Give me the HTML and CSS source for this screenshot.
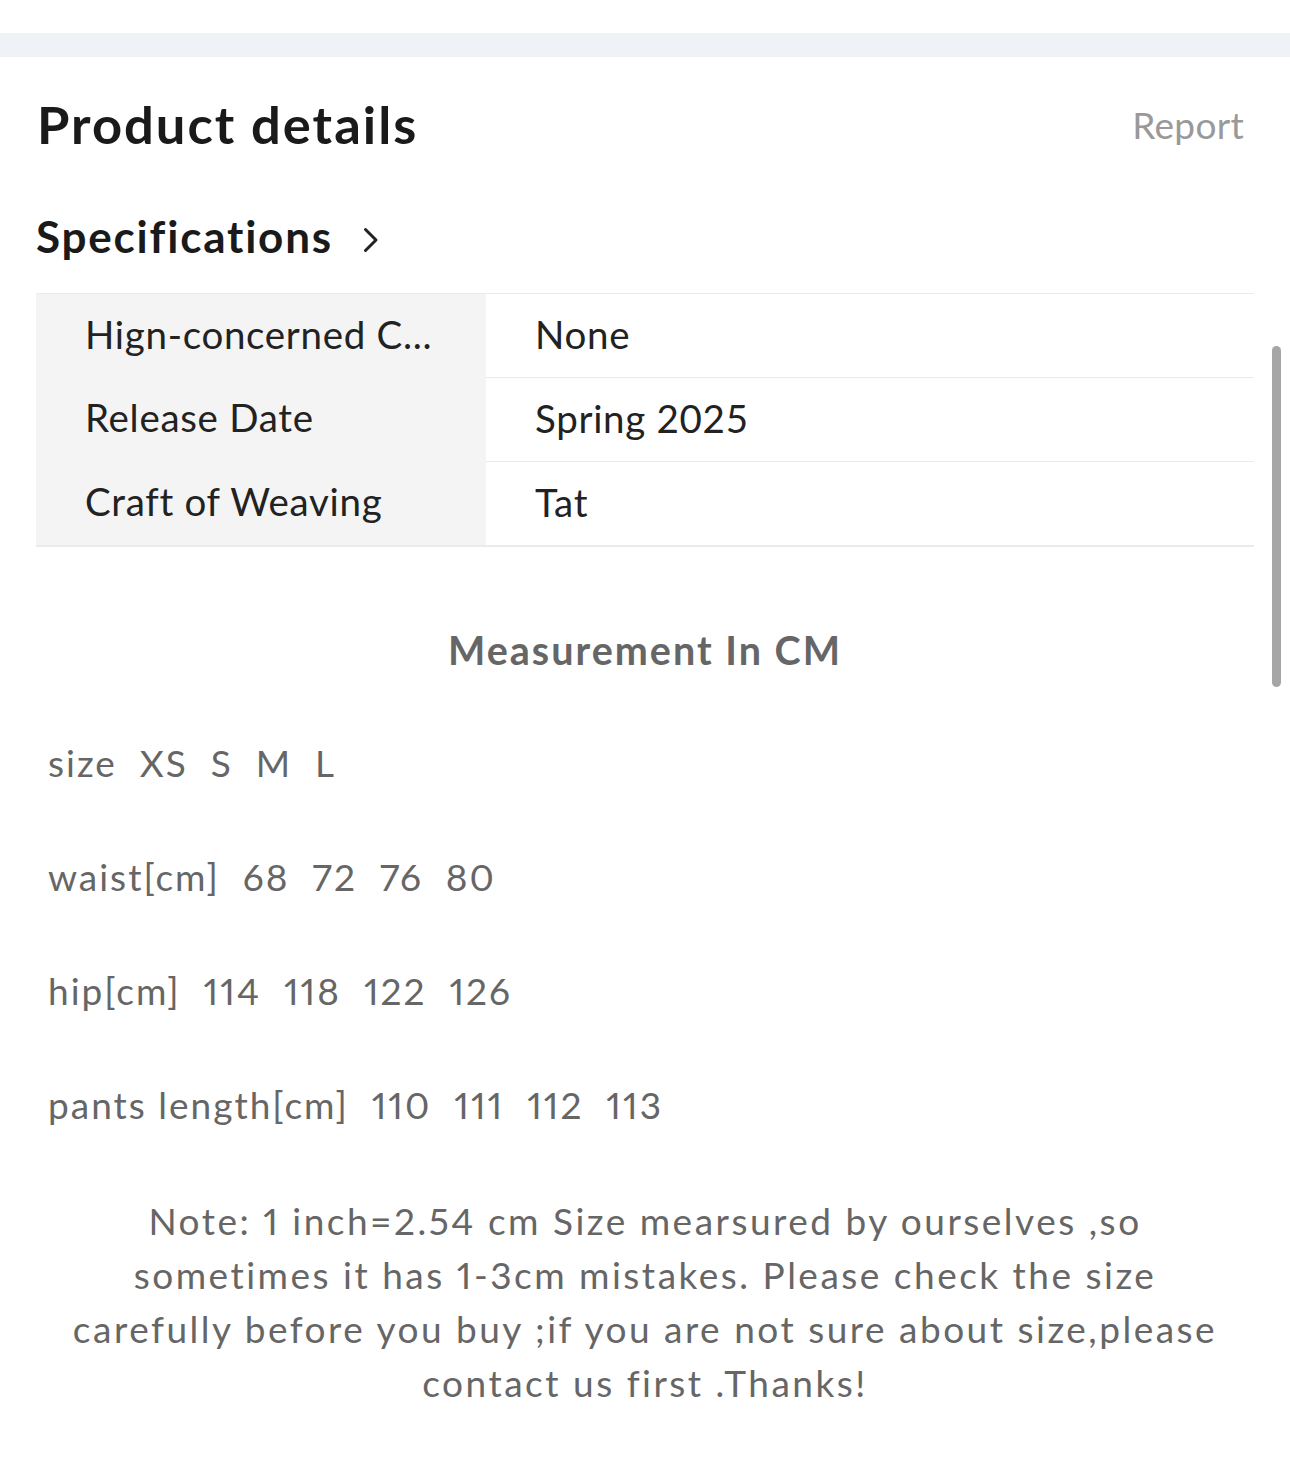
FILE: index.html
```html
<!DOCTYPE html>
<html lang="en">
<head>
<meta charset="utf-8">
<title>Product details</title>
<link rel="stylesheet" href="styles.css">
</head>
<body>
<div class="top-space"></div>
<div class="band"></div>
<main class="details">
  <header class="details-head">
    <h1 class="title">Product details</h1>
    <a class="report">Report</a>
  </header>
  <h2 class="spec-title"><span>Specifications</span>
    <svg class="chev" width="16" height="26" viewBox="0 0 16 26"><path d="M2.5 2.5 L13 13 L2.5 23.5" fill="none" stroke="#222" stroke-width="3" stroke-linecap="round" stroke-linejoin="round"/></svg>
  </h2>
  <div class="spec-table">
    <div class="spec-row"><div class="spec-key">Hign-concerned C...</div><div class="spec-val">None</div></div>
    <div class="spec-row"><div class="spec-key">Release Date</div><div class="spec-val">Spring 2025</div></div>
    <div class="spec-row"><div class="spec-key">Craft of Weaving</div><div class="spec-val">Tat</div></div>
  </div>
  <section class="desc">
    <h3 class="meas-title">Measurement In CM</h3>
    <p class="meas-line">size&nbsp; XS&nbsp; S&nbsp; M&nbsp; L</p>
    <p class="meas-line">waist[cm]&nbsp; 68&nbsp; 72&nbsp; 76&nbsp; 80</p>
    <p class="meas-line">hip[cm]&nbsp; 114&nbsp; 118&nbsp; 122&nbsp; 126</p>
    <p class="meas-line">pants length[cm]&nbsp; 110&nbsp; 111&nbsp; 112&nbsp; 113</p>
    <p class="note">Note: 1 inch=2.54 cm Size mearsured by ourselves ,so sometimes it has 1-3cm mistakes. Please check the size carefully before you buy ;if you are not sure about size,please contact us first .Thanks!</p>
  </section>
</main>
<div class="scrollbar"></div>
</body>
</html>
```
FILE: styles.css
```css
html, body {
  margin: 0;
  padding: 0;
  background: #fff;
}
body {
  font-family: Lato, "Open Sans", sans-serif;
  color: #1a1a1a;
  width: 1290px;
  height: 1476px;
  overflow: hidden;
  position: relative;
}
.top-space { height: 33px; }
.band { height: 24px; background: #eff2f6; }
.details { padding: 0 36px; }
.details-head {
  display: flex;
  justify-content: space-between;
  align-items: flex-start;
  margin-top: 37px;
  padding-left: 1px;
  padding-right: 10px;
}
.title {
  margin: 0;
  font-size: 52.5px;
  font-weight: 700;
  letter-spacing: 2px;
  line-height: 60px;
  color: #1a1a1a;
}
.report {
  margin-top: 9px;
  font-size: 37px;
  line-height: 44px;
  letter-spacing: 0.3px;
  color: #999;
}
.spec-title {
  margin: 56px 0 0 0;
  font-size: 44px;
  font-weight: 700;
  letter-spacing: 1.8px;
  line-height: 52px;
  display: flex;
  align-items: center;
  gap: 30px;
  color: #1a1a1a;
}
.chev { margin-top: 7px; }
.spec-table {
  margin-top: 31px;
  border-top: 1px solid #ebebeb;
  border-bottom: 2px solid #ebebeb;
}
.spec-row {
  display: flex;
  height: 83px;
}
.spec-row + .spec-row { height: 84px; }
.spec-row + .spec-row .spec-val { border-top: 1px solid #ebebeb; }
.spec-key,
.spec-val {
  display: flex;
  align-items: center;
  padding-bottom: 4px;
  box-sizing: border-box;
  font-size: 38.5px;
  letter-spacing: 0.7px;
  color: #222;
}
.spec-key {
  width: 450px;
  flex: none;
  background: #f4f4f4;
  padding-left: 49px;
}
.spec-val {
  flex: 1;
  padding-left: 49px;
}
.desc { padding-top: 79px; }
.meas-title {
  margin: 0;
  text-align: center;
  font-size: 39.5px;
  font-weight: 700;
  letter-spacing: 2px;
  color: #666;
  line-height: 48px;
}
.meas-line,
.note {
  font-size: 37px;
  line-height: 54px;
  letter-spacing: 2px;
  font-variant-numeric: proportional-nums;
  color: #666;
}
.meas-line {
  margin: 60px 0 0 12px;
}
.meas-line:first-of-type { margin-top: 62px; }
.note {
  margin: 62px 24px 0;
  letter-spacing: 2.5px;
  text-align: center;
}
.scrollbar {
  position: absolute;
  left: 1272px;
  top: 346px;
  width: 9px;
  height: 341px;
  border-radius: 5px;
  background: #a6a6a6;
}
```
